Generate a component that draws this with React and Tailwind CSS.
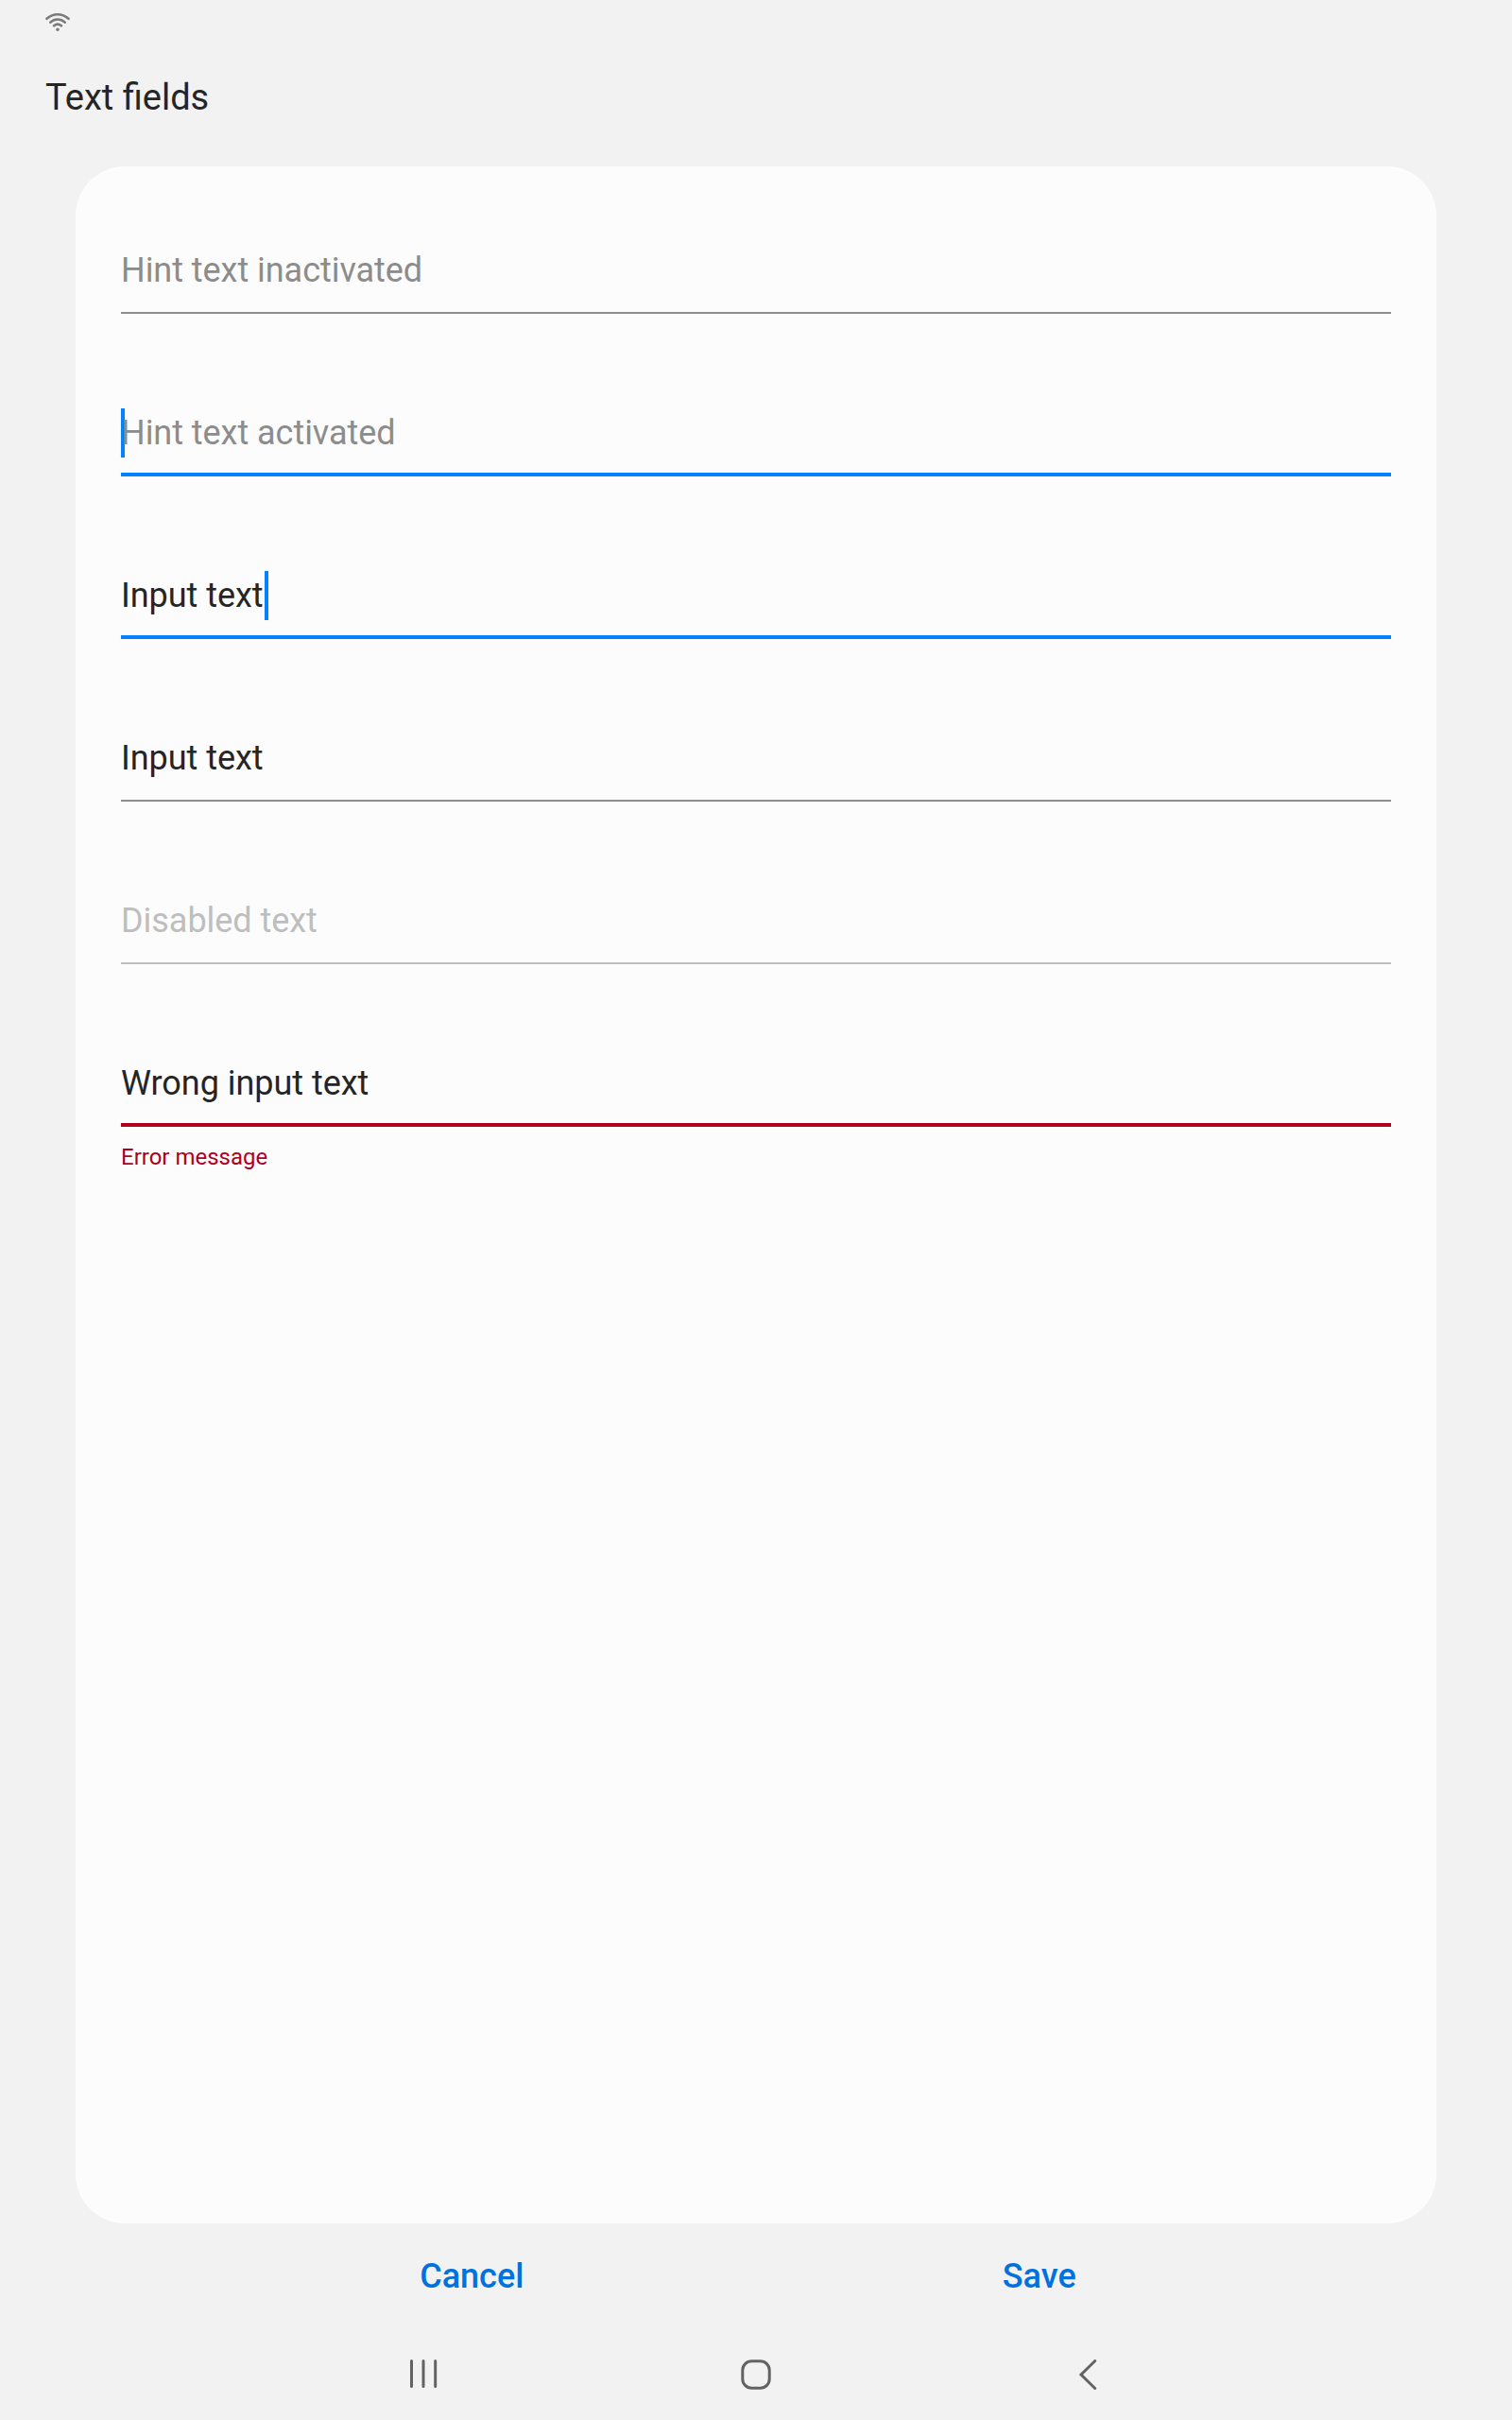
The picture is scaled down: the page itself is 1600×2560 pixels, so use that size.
import React from 'react';

const CARET = 'h-[52px] w-1 shrink-0 bg-[#0381fe]';

function Field({ text, color, line, caret, error }) {
  return (
    <div className="h-[172px]">
      <div className="flex h-[60px] items-center">
        {caret === 'start' && <span className={`${CARET} -mr-1`} />}
        <span className={`text-[36px] leading-[42px] tracking-[-0.04px] whitespace-nowrap ${color}`}>{text}</span>
        {caret === 'end' && <span className={`${CARET} ml-px`} />}
      </div>
      <div className="flex h-4 items-end"><div className={`w-full ${line}`} /></div>
      {error && <div className="mt-4 text-[24px] leading-8 text-[#b00020]">{error}</div>}
    </div>
  );
}

export default function App() {
  const thin = 'h-0.5 bg-[#8c8c8c]';
  const blue = 'h-1 bg-[#0381fe]';
  return (
    <div className="flex h-[2560px] w-[1600px] flex-col bg-[#f2f2f2] font-['Roboto',sans-serif] text-[#252525]">
      <div className="flex h-12 items-start pl-12 pt-[13px]">
        <svg width="26" height="21" viewBox="0 0 26 21" fill="none" stroke="#7b7b7b" strokeWidth="2.6" strokeLinecap="round">
          <path d="M1.5 6.8C8.2 .7 17.8 .7 24.5 6.8M5.3 10.6C9.8 6.5 16.2 6.5 20.7 10.6M9.1 14.2C11.4 12.3 14.6 12.3 16.9 14.2" />
          <circle cx="13" cy="18.3" r="1.8" fill="#7b7b7b" stroke="none" />
        </svg>
      </div>
      <h1 className="h-32 pl-12 pt-[33px] text-[38px] leading-[45px]">Text fields</h1>
      <main className="mx-20 h-[2176px] rounded-[52px] bg-[#fcfcfc] px-12 pt-20">
        <Field text="Hint text inactivated" color="text-[#8c8c8c]" line={thin} />
        <Field text="Hint text activated" color="text-[#8c8c8c]" line={blue} caret="start" />
        <Field text="Input text" color="text-[#252525]" line={blue} caret="end" />
        <Field text="Input text" color="text-[#252525]" line={thin} />
        <Field text="Disabled text" color="text-[#bebebe]" line="h-0.5 bg-[#bebebe]" />
        <Field text="Wrong input text" color="text-[#252525]" line="h-1 bg-[#b00020]" error="Error message" />
      </main>
      <div className="flex h-28 items-center pl-[199px] pr-[200px] text-[36px] font-medium text-[#0072de]">
        <button className="w-1/2">Cancel</button>
        <button className="w-1/2">Save</button>
      </div>
      <nav className="flex h-24 items-center justify-center text-[#636363]">
        <button className="flex w-[352px] justify-center">
          <svg width="32" height="32" viewBox="0 0 32 32" fill="none" stroke="currentColor" strokeWidth="3" strokeLinecap="round">
            <path d="M3.5 1.5V28.5M16 1.5V28.5M28.7 1.5V28.5" />
          </svg>
        </button>
        <button className="flex w-[352px] justify-center">
          <svg width="32" height="32" viewBox="0 0 32 32" fill="none" stroke="currentColor" strokeWidth="3">
            <rect x="1.8" y="1.8" width="28.4" height="28.4" rx="9.5" />
          </svg>
        </button>
        <button className="flex w-[352px] justify-center">
          <svg width="32" height="32" viewBox="0 0 32 32" fill="none" stroke="currentColor" strokeWidth="3" strokeLinecap="round">
            <path d="M22.7 1.5L8 16L22.7 30.5" />
          </svg>
        </button>
      </nav>
    </div>
  );
}
